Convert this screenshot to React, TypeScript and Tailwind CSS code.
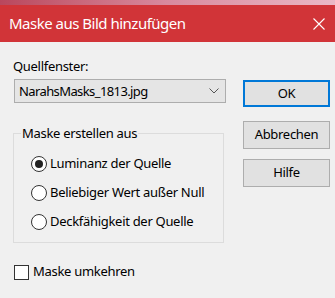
import React, { useState } from "react";

const options = [
  "Luminanz der Quelle",
  "Beliebiger Wert außer Null",
  "Deckfähigkeit der Quelle",
];

export default function App() {
  const [mode, setMode] = useState(0);
  const [invert, setInvert] = useState(false);

  return (
    <div className="w-[335px] h-[298px] bg-[#f0f0f0] text-black font-['Noto_Sans',sans-serif] tracking-[-0.3px] overflow-hidden">
      <div className="h-[5px] bg-gradient-to-r from-[#b9475d] via-[#d88a9e] to-[#eab8c6]" />

      {/* title bar */}
      <div className="h-[37px] bg-[#d13438] flex items-center justify-between pl-[9px] pr-[10px]">
        <span className="text-white text-[15px] leading-none tracking-[-0.5px]">Maske aus Bild hinzufügen</span>
        <svg width="12" height="12" viewBox="0 0 12 12">
          <path d="M0.5 0.5 L11.5 11.5 M11.5 0.5 L0.5 11.5" stroke="white" strokeWidth="1.1" />
        </svg>
      </div>

      <div className="flex pl-[13px] pt-[15px]">
        {/* left column */}
        <div className="w-[214px]">
          <div className="text-[13px] leading-[18px]">Quellfenster:</div>
          <div className="mt-[4px] ml-[1px] h-[24px] w-[212px] bg-[#e5e5e5] border border-[#adadad] flex items-center justify-between pl-[4px] pr-[6px]">
            <span className="text-[13px] leading-none tracking-[-0.6px]">NarahsMasks_1813.jpg</span>
            <svg width="10" height="6" viewBox="0 0 10 6">
              <path d="M0.5 0.5 L5 5 L9.5 0.5" fill="none" stroke="#555" strokeWidth="1" />
            </svg>
          </div>

          <fieldset className="mt-[21px] w-[211px] border border-[#dcdcdc] pl-[18px] pt-[7px] pb-[6px]">
            <legend className="ml-[-11px] px-[1px] text-[13px] leading-[18px]">Maske erstellen aus</legend>
            {options.map((label, i) => (
              <label key={label} className="h-[29px] flex items-center gap-[3px] text-[13px] cursor-default" onClick={() => setMode(i)}>
                <span className="-ml-[1px] w-[16px] h-[16px] rounded-full border border-[#333] bg-white flex items-center justify-center">
                  {mode === i && <span className="w-[8px] h-[8px] rounded-full bg-[#222]" />}
                </span>
                <span>{label}</span>
              </label>
            ))}
          </fieldset>

          <label className="mt-[19px] ml-[1px] h-[20px] flex items-center gap-[4px] text-[13px]" onClick={() => setInvert(!invert)}>
            <span className="w-[15px] h-[15px] border border-[#333] bg-white flex items-center justify-center text-[11px] leading-none">
              {invert ? "✓" : ""}
            </span>
            <span>Maske umkehren</span>
          </label>
        </div>

        {/* buttons */}
        <div className="ml-[16px] pt-[23px] flex flex-col w-[87px]">
          <button className="h-[27px] border-2 border-[#0078d7] bg-[#e1e1e1] text-[13px]">OK</button>
          <button className="mt-[14px] h-[28px] border border-[#adadad] bg-[#e1e1e1] text-[13px]">Abbrechen</button>
          <button className="mt-[10px] h-[28px] border border-[#adadad] bg-[#e1e1e1] text-[13px]">Hilfe</button>
        </div>
      </div>
    </div>
  );
}
